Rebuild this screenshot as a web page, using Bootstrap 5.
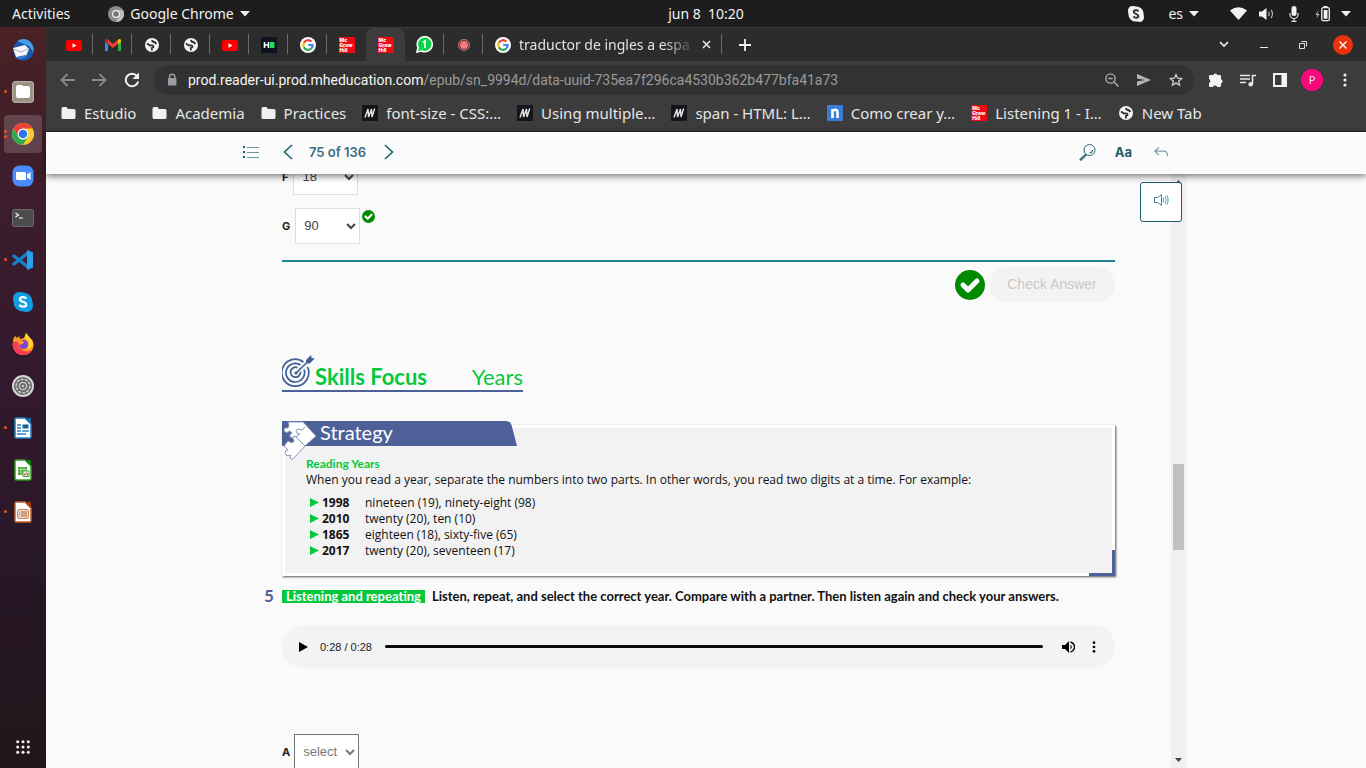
<!DOCTYPE html>
<html lang="es">
<head>
<meta charset="utf-8">
<meta name="viewport" content="width=device-width, initial-scale=1">
<title>Reader – Skills Focus: Years</title>
<link href="https://cdn.jsdelivr.net/npm/bootstrap@5.3.0/dist/css/bootstrap.min.css" rel="stylesheet">
<style>
:root{--ui:"Noto Sans","Open Sans",sans-serif;--book:"Open Sans","Noto Sans",sans-serif;--title:Lato,"Open Sans",sans-serif;--label:Inter,sans-serif;--arial:"Liberation Sans",Arial,sans-serif;--navy:#4d6198;--lime:#05c83c;--petrol:#1f5c6b}
body{font:14px/20px var(--ui);background:#fafafa}
svg{display:block;flex:none}
button{border:0;background:none;padding:0;color:inherit;font:inherit}
/* system bar */
.sysbar{height:27px;background:#1d1d1d;color:#f2f2f2;flex:none}
.sysbar .clock{position:absolute;left:46px;right:0;text-align:center;pointer-events:none}
.app-menu{margin-left:38px;gap:6px}
/* dock */
.dock{width:46px;background:linear-gradient(#4a2124,#3d1d2c 22%,#32192d 50%,#271726 75%,#221619);padding:2px 0 0;flex:none}
.dock-item{width:46px;height:42px;position:relative;display:grid;place-items:center}
.dock-item.current::before{content:"";position:absolute;inset:2px 4px;border-radius:4px;background:#ffffff2b}
.dock-item.running::after{content:"";position:absolute;left:4px;top:19px;width:3px;height:3px;border-radius:2px;background:#e95420}
.dock-item.double::after{top:17px;box-shadow:0 5px #e95420}
.dock-item svg{position:relative}
/* browser chrome */
.tabstrip{height:34px;background:#2c2c2c;border-top:1px solid #3d3d3d;padding-left:8px;flex:none}
.tab{width:39px;height:33px;display:grid;place-items:center;position:relative}
.tab.split::after{content:"";position:absolute;right:0;top:6px;width:1px;height:20px;background:#6a6a6a}
.tab.on{background:#3c3c3c;border-radius:8px 8px 0 0}
.tab-wide{width:239px;display:flex;align-items:center;padding:0 11px 0 12px;color:#e2e2e2}
.tab-title{width:176px;overflow:hidden;white-space:nowrap;text-align:left;-webkit-mask-image:linear-gradient(90deg,#000 82%,transparent);mask-image:linear-gradient(90deg,#000 82%,transparent)}
.win-tools{margin-right:13px;gap:31px}
.close-win{width:20px;height:20px;border-radius:50%;background:#e9330a;display:grid;place-items:center;margin-left:-5px}
.mcg{width:16px;height:16px;background:#ee0a14;color:#fff;font:800 5px/5px var(--label);text-align:left;padding:1px 0 0 1px;flex:none;display:block;white-space:nowrap}
.toolbar{background:#3c3c3c;padding:4px 12px 0 14px;flex:none;color:#e8e8e8}
.omnibox{height:30px;border-radius:15px;background:#323232;padding:0 11px 0 11px;color:#9a9a9a;font-family:Roboto,sans-serif}
.omnibox .host{color:#f5f5f5}
.profile{margin:0 20px 0 14px;width:22px;height:22px;background:#f9077c;font-size:11px;line-height:22px}
.bookmarks{height:37px;background:#3c3c3c;border-bottom:1px solid #1f1d1e;padding-left:15px;gap:16px;flex:none;font-size:15px}
.bookmarks a{color:#e6e6e6;text-decoration:none;display:flex;align-items:center;gap:8px;white-space:nowrap}
/* reader */
.reader-head{height:42px;background:#fbfbfb;box-shadow:0 2px 7px #0000008c;position:relative;z-index:2;flex:none}
.frame{width:100%;max-width:960px}
.reader-head .frame{padding:0 17px 2px;color:var(--petrol)}
.pages{font:600 13px/20px var(--label);color:#3f6c7c}
.book{padding:0 56px;font:12px/16px var(--book);color:#111;overflow:hidden}
.answers{margin-top:-15px;gap:13px}
.answers label,.next label{font:700 11px/16px var(--label);color:#222;margin-right:5px}
.next label{margin-right:4px}
.ok-mark{margin:2px 0 0 2px}
.pick{appearance:none;width:65px;height:36px;border:1px solid #ddd;border-radius:0;font:13px/20px var(--arial);color:#444;padding:0 0 0 8px;background:#fff url("data:image/svg+xml,%3Csvg xmlns='http://www.w3.org/2000/svg' width='10' height='7'%3E%3Cpath d='M1 1l4 4 4-4' fill='none' stroke='%23444' stroke-width='2'/%3E%3C/svg%3E") no-repeat right 3px center}
.next .pick{border-color:#767676;color:#777;background-image:url("data:image/svg+xml,%3Csvg xmlns='http://www.w3.org/2000/svg' width='10' height='7'%3E%3Cpath d='M1 1l4 4 4-4' fill='none' stroke='%23777' stroke-width='2'/%3E%3C/svg%3E")}
.check-row{border-top:2px solid #1f8590;margin-top:16px;padding-top:5px;gap:4px}
.check-btn{height:35px;width:126px;border-radius:18px;background:#f3f3f3;color:#ccc7c7;font:14px/20px var(--arial);padding-bottom:2px}
.skills{color:var(--lime);border-bottom:2px solid var(--navy);margin-top:53px;height:37px;width:241px;font:22px/26px var(--title)}
.strategy{margin-top:33px;border:3px solid #fff;background:#f2f2f2;box-shadow:1px 1px 2px #555;height:151px;padding:28px 21px 0;position:relative}
.strategy-tab{position:absolute;left:-3px;top:-7px}
.strategy-tab h2{position:absolute;left:38px;top:0;margin:0;color:#fff;font:20px/22px var(--title)}
.corner{position:absolute;right:-3px;bottom:-3px;width:26px;height:26px;border:solid var(--navy);border-width:0 3px 3px 0}
.green{color:var(--lime);font:700 12px/16px var(--title)}
.years li{display:flex;align-items:center}
.years svg{margin-bottom:2px}
.years b{width:46px;padding-left:3px}
.task{margin:12px 0 0 -18px;font:700 13px/16px var(--title)}
.task .num{width:18px;font-size:17px;color:var(--navy)}
.task .tagline{background:var(--lime);color:#fff;padding:0 4px;line-height:13px;margin-right:7px}
.player{margin-top:21px;height:43px;border-radius:22px;background:#f1f3f4;padding:0 17px;font:11px/16px var(--arial);color:#222}
.player input{appearance:none;height:3px;background:#0a0a0a;border-radius:2px;min-width:0}
.player input::-webkit-slider-thumb{appearance:none;width:0;height:0}
.next{margin-top:66px}
.scroller{width:15px;background:#f0f0f0;padding:6px 2px;flex:none}
.thumb{width:11px;height:86px;background:#c1c1c1;margin-top:280px}
.speak{position:absolute;right:4px;top:8px;width:42px;height:40px;border:1px solid var(--petrol);border-radius:3px;background:#fff;padding:0 0 4px}
</style>
</head>
<body class="vh-100 overflow-hidden d-flex flex-column">
<svg width="0" height="0" class="position-absolute" aria-hidden="true">
<symbol id="yt" viewBox="0 0 16 16"><rect y="3" width="16" height="11" rx="2.500" fill="#f00"/><path d="M6.500 6.300v4.400l4-2.200z" fill="#fff"/></symbol>
<symbol id="globe" viewBox="0 0 16 16"><circle cx="8" cy="8" r="7" fill="#f5f5f5"/><path d="M3 6.500l3 2q3-.5 3.500.8.200 1.500-1.800 1.700l.3 2.500" stroke="#2c2c2c" stroke-width="1.700" fill="none"/><path d="M8.500 2.800q-.8 1.700.8 2 2 .2 3 2.200" stroke="#2c2c2c" stroke-width="1.900" fill="none"/></symbol>
<symbol id="goog" viewBox="0 0 16 16"><circle cx="8" cy="8" r="8" fill="#fff"/><g fill="none" stroke-width="2.200"><path d="M11.400 4.600A4.800 4.800 0 0 0 3.900 5.600" stroke="#ea4335"/><path d="M3.900 5.600a4.800 4.800 0 0 0 0 4.800" stroke="#fbbc05"/><path d="M3.900 10.400a4.800 4.800 0 0 0 7.300 1.200" stroke="#34a853"/><path d="M11.200 11.600A4.600 4.600 0 0 0 12.700 8H8.200" stroke="#4285f4"/></g></symbol>
<symbol id="mdn" viewBox="0 0 16 16"><rect width="16" height="16" fill="#15141a"/><path d="M3 12.500L6 4M6 4l.6 8L9.500 4l.5 8L12.700 3.500" fill="none" stroke="#e4e4e4" stroke-width="1.400"/></symbol>
<symbol id="folder" viewBox="0 0 14 12"><path d="M0 1.500Q0 0 1.500 0H5l1.500 2h6Q14 2 14 3.500v7Q14 12 12.500 12h-11Q0 12 0 10.500z" fill="#f1f1f1"/></symbol>
<symbol id="caret" viewBox="0 0 10 6"><path d="M0 0h10L5 5.500z" fill="#f2f2f2"/></symbol>
<symbol id="ok" viewBox="0 0 30 30"><circle cx="15" cy="15" r="15" fill="#008a00"/><path d="M8 15l5 5 9-9" fill="none" stroke="#fff" stroke-width="5" stroke-linecap="round" stroke-linejoin="round"/></symbol>
<symbol id="tri" viewBox="0 0 9 9"><path d="M0 0l9 4.500L0 9z" fill="#05c83c"/></symbol>
<symbol id="kebab" viewBox="0 0 4 14"><circle cx="2" cy="2" r="1.600"/><circle cx="2" cy="7" r="1.600"/><circle cx="2" cy="12" r="1.600"/></symbol>
</svg>

<header class="sysbar d-flex align-items-center position-relative px-2">
  <button class="ms-1">Activities</button>
  <button class="app-menu d-flex align-items-center"><svg width="16" height="16" viewBox="0 0 16 16"><circle cx="8" cy="8" r="8" fill="#8b8b8b"/><path d="M8 4h7A8 8 0 0 1 8 16l3.500-6" fill="#bcbcbc"/><circle cx="8" cy="8" r="4" fill="#f0f0f0"/><circle cx="8" cy="8" r="2.800" fill="#777"/></svg><span>Google Chrome</span><svg width="10" height="6"><use href="#caret"/></svg></button>
  <span class="clock">jun 8&nbsp; 10:20</span>
  <div class="ms-auto d-flex align-items-center" style="margin-right:7px">
    <svg width="16" height="16" viewBox="0 0 16 16"><path d="M4.500 0C6 0 7 .4 8 .4A7.500 7.500 0 0 1 15.600 8c0 1 .4 2 .4 3.500A4.500 4.500 0 0 1 11.500 16C10 16 9 15.600 8 15.600A7.500 7.500 0 0 1 .4 8C.4 7 0 6 0 4.500A4.500 4.500 0 0 1 4.500 0z" fill="#f2f2f2"/><path d="M10.500 5.300C9.500 3.800 5.600 3.900 5.700 6c.1 2 4.900 1.600 4.800 4 0 2.200-4.200 2.200-5.200.4" fill="none" stroke="#333" stroke-width="1.900"/></svg>
    <span style="margin:0 6px 0 24px">es</span><svg width="10" height="6"><use href="#caret"/></svg>
    <svg style="margin-left:31px" width="17" height="13" viewBox="0 0 17 13"><path d="M0 3.500Q8.500-3 17 3.500L8.500 13z" fill="#f2f2f2"/></svg>
    <svg style="margin-left:12px" width="15" height="14" viewBox="0 0 15 14"><path d="M0 4.500h3L7.500 1v12L3 9.500H0z" fill="#f2f2f2"/><path d="M9.500 5q1.500 2 0 4M12 3q3 4 0 8" fill="none" stroke="#aaa" stroke-width="1.300"/></svg>
    <svg style="margin-left:15px" width="10" height="16" viewBox="0 0 10 16"><rect x="2.500" width="5" height="10" rx="2.500" fill="#f2f2f2"/><path d="M1 7v1.500a4 4 0 0 0 8 0V7M5 12.500V15M2.500 15.400h5" fill="none" stroke="#ddd" stroke-width="1.200"/></svg>
    <svg style="margin-left:16px" width="15" height="16" viewBox="0 0 15 16"><path d="M3.500 4L.5 9h2L1.500 12.500 4.500 8h-2z" fill="#bbb"/><rect x="6.800" y="1.700" width="7.500" height="13" rx="1.500" fill="none" stroke="#f2f2f2" stroke-width="1.300"/><path d="M8.700 4h3.800v8.800H8.700zM8.500 0h4v2h-4z" fill="#f2f2f2"/></svg>
    <svg style="margin-left:11px" width="10" height="6"><use href="#caret"/></svg>
  </div>
</header>

<div class="d-flex flex-grow-1" style="min-height:0">
<nav class="dock d-flex flex-column" aria-label="Dock">
  <button class="dock-item" aria-label="Thunderbird"><svg width="22" height="22" viewBox="0 0 22 22"><circle cx="11.500" cy="11" r="10.500" fill="#1c56ad"/><path d="M5 2Q14-3 20 5q2 4 1.500 8L17 7z" fill="#45a1e8"/><path d="M1 9l12-3 4 4-3 7-10 1z" fill="#f6f6f9"/><path d="M1 10l8 3 7-3" fill="none" stroke="#aac" stroke-width="1"/><path d="M3 19Q10 22 15 17l-2-1-8 2z" fill="#2e79cf"/></svg></button>
  <button class="dock-item running" aria-label="Files"><svg width="22" height="22" viewBox="0 0 22 22"><rect x=".7" y=".7" width="20.600" height="20.600" rx="2" fill="#9a9283" stroke="#cbc5b8"/><path d="M4 6q0-2 2-2h4l1 1h5q2 0 2 2v8q0 2-2 2H6q-2 0-2-2z" fill="#fff"/></svg></button>
  <button class="dock-item current running double" aria-label="Google Chrome"><svg width="22" height="22" viewBox="0 0 22 22"><circle cx="11" cy="11" r="11" fill="#fcc934"/><path d="M1.500 5.500A11 11 0 0 1 20.500 5.500H11L6.200 13.700z" fill="#ea4335"/><path d="M1.500 5.500L6.200 13.700 11 16.500l4.800-2.800L11 22A11 11 0 0 1 1.500 5.500z" fill="#2da94f"/><circle cx="11" cy="11" r="5.500" fill="#fff"/><circle cx="11" cy="11" r="4.300" fill="#2a78e8"/></svg></button>
  <button class="dock-item" aria-label="Zoom"><svg width="22" height="22" viewBox="0 0 22 22"><rect x=".5" y=".5" width="21" height="21" rx="7" fill="#4a8cff"/><path d="M4 7h8.500q1.500 0 1.500 1.500V15H5.500Q4 15 4 13.500zM15 9.500L18.500 7v8L15 12.500z" fill="#fff"/></svg></button>
  <button class="dock-item" aria-label="Terminal"><svg width="22" height="18" viewBox="0 0 22 18"><rect x=".5" y=".5" width="21" height="17" rx="2" fill="#4c4c4c" stroke="#6b6b6b"/><path d="M3.500 4l3 2-3 2M7 9h4" fill="none" stroke="#fff" stroke-width="1.100"/></svg></button>
  <button class="dock-item running" aria-label="VS Code"><svg width="22" height="22" viewBox="0 0 22 22"><path d="M2 7l14 11M2 15L16 4" stroke="#1681ca" stroke-width="3.400" stroke-linecap="round"/><path d="M15 1l6 2.500v15L15 21z" fill="#27a3ee"/></svg></button>
  <button class="dock-item" aria-label="Skype"><svg width="22" height="22" viewBox="0 0 22 22"><path d="M7 1c2 0 3 .5 4 .5a9.500 9.500 0 0 1 9.500 9.500c0 1 .5 2 .5 4a6 6 0 0 1-6 6c-2 0-3-.5-4-.5A9.500 9.500 0 0 1 1.500 11C1.500 10 1 9 1 7a6 6 0 0 1 6-6z" fill="#0f9fe0"/><path d="M14.300 7.600C13 5.500 8 5.600 8 8.400c0 2.700 6.300 2 6.300 5.100 0 2.900-5.500 2.800-6.800.4" fill="none" stroke="#fff" stroke-width="2.300"/></svg></button>
  <button class="dock-item" aria-label="Firefox"><svg width="22" height="22" viewBox="0 0 22 22"><path d="M1 9Q1 5 3 3l2 2 2-2 1 3 4-1 2-5 4 5q3 2 3.500 6A10 10 0 0 1 11 22 10.500 10.500 0 0 1 1 9z" fill="#ff9a22"/><path d="M1 9a10.500 10.500 0 0 0 10 13 10 10 0 0 0 9-5q-8 4-13-3Q6 10 8 8z" fill="#fb3a55"/><path d="M14 0l4 5q3 2 3 7-3 4-5 4l1-7-4-4z" fill="#ffd634"/><circle cx="11.500" cy="11.500" r="4.500" fill="#7a44d8"/><path d="M5 8h6l1 2-4 2z" fill="#ff9a22"/></svg></button>
  <button class="dock-item" aria-label="Settings"><svg width="22" height="22" viewBox="0 0 22 22"><circle cx="11" cy="11" r="10" fill="#686868" stroke="#d6d6d6" stroke-width="2"/><circle cx="11" cy="11" r="6.800" fill="none" stroke="#ccc" stroke-width="1.600" stroke-dasharray="3 1.200"/><circle cx="11" cy="11" r="3.600" fill="none" stroke="#ccc" stroke-width="1.400"/><circle cx="11" cy="11" r="1.200" fill="#ccc"/></svg></button>
  <button class="dock-item running" aria-label="Writer"><svg width="18" height="22" viewBox="0 0 18 22"><path d="M1 2q0-1 1-1h9l6 6v13q0 1-1 1H2q-1 0-1-1z" fill="#fff" stroke="#1f7fc0" stroke-width="1.500"/><path d="M11 1h6v6z" fill="#1569a5"/><path d="M3 8h4M3 11h4M3 14h4M3 17h9M8 14h7" stroke="#2a86c7" stroke-width="1.500"/><path d="M8.500 7.500h6v4h-6z" fill="#17618f"/></svg></button>
  <button class="dock-item" aria-label="Calc"><svg width="18" height="22" viewBox="0 0 18 22"><path d="M1 2q0-1 1-1h9l6 6v13q0 1-1 1H2q-1 0-1-1z" fill="#fff" stroke="#2a9a1e" stroke-width="1.500"/><path d="M11 1h6v6z" fill="#107c10"/><path d="M4 8h9v8H4z" fill="#43a832"/><path d="M4 10.500h9M4 13h9M7 8v8M10 8v8" stroke="#bfe8b8" stroke-width=".7"/><path d="M9 12h6v5.500H9z" fill="#fff" stroke="#43a832"/><path d="M10.500 16.500v-2M12 16.500v-3.500M13.500 16.500v-2.500" stroke="#c55"/></svg></button>
  <button class="dock-item running" aria-label="Impress"><svg width="18" height="22" viewBox="0 0 18 22"><path d="M1 2q0-1 1-1h9l6 6v13q0 1-1 1H2q-1 0-1-1z" fill="#fff" stroke="#c0602c" stroke-width="1.500"/><path d="M11 1h6v6z" fill="#a33e03"/><rect x="3.500" y="8.500" width="11" height="9" rx="1.500" fill="#f5d9c8" stroke="#c98360"/><path d="M5 11h1M7 11h6M5 13h1M7 13h6M5 15h1M7 15h6" stroke="#b5633b"/></svg></button>
  <button class="dock-item mt-auto" aria-label="Show Applications"><svg width="14" height="14" viewBox="0 0 14 14" fill="#f4f4f4"><circle cx="1.700" cy="1.700" r="1.500"/><circle cx="7" cy="1.700" r="1.500"/><circle cx="12.300" cy="1.700" r="1.500"/><circle cx="1.700" cy="7" r="1.500"/><circle cx="7" cy="7" r="1.500"/><circle cx="12.300" cy="7" r="1.500"/><circle cx="1.700" cy="12.300" r="1.500"/><circle cx="7" cy="12.300" r="1.500"/><circle cx="12.300" cy="12.300" r="1.500"/></svg></button>
</nav>

<div class="d-flex flex-column flex-grow-1" style="min-width:0">
  <div class="tabstrip d-flex">
    <button class="tab split" aria-label="YouTube"><svg width="16" height="16"><use href="#yt"/></svg></button>
    <button class="tab split" aria-label="Gmail"><svg width="16" height="12" viewBox="0 0 16 12"><path d="M1.500 12V2" stroke="#4285f4" stroke-width="3"/><path d="M14.500 12V2" stroke="#34a853" stroke-width="3"/><path d="M1.500 1.500L8 7l6.500-5.500" fill="none" stroke="#ea4335" stroke-width="3.200"/><path d="M0 1.500q.3-2 2-1.300l1 1v4L0 3z" fill="#c5221f"/><path d="M16 1.500q-.3-2-2-1.300l-1 1v4L16 3z" fill="#fbbc04"/></svg></button>
    <button class="tab split" aria-label="New Tab"><svg width="16" height="16"><use href="#globe"/></svg></button>
    <button class="tab split" aria-label="New Tab"><svg width="16" height="16"><use href="#globe"/></svg></button>
    <button class="tab split" aria-label="YouTube"><svg width="16" height="16"><use href="#yt"/></svg></button>
    <button class="tab split" aria-label="HackerRank"><svg width="16" height="16" viewBox="0 0 16 16"><rect width="16" height="16" fill="#0e141e"/><path d="M3.500 5v6M7.500 5v6M3.500 8h4" stroke="#fff" stroke-width="1.600"/><path d="M9 5h4.500v6H9z" fill="#1fe05e"/></svg></button>
    <button class="tab split" aria-label="Google"><svg width="16" height="16"><use href="#goog"/></svg></button>
    <button class="tab"><span class="mcg">Mc<br>Graw<br>Hill</span></button>
    <button class="tab on"><span class="mcg">Mc<br>Graw<br>Hill</span></button>
    <button class="tab split" aria-label="WhatsApp"><svg width="17" height="17" viewBox="0 0 17 17"><path d="M1 16l1-4.500A7.500 7.500 0 1 1 5.500 15z" fill="#0bd146" stroke="#fff" stroke-width="1.600"/><path d="M6.800 6.500L9 5v7" fill="none" stroke="#fff" stroke-width="1.600"/></svg></button>
    <button class="tab split" aria-label="Recorder"><svg width="12" height="12" viewBox="0 0 12 12"><circle cx="6" cy="6" r="5.400" fill="none" stroke="#f37a78"/><circle cx="6" cy="6" r="4" fill="#f37a78"/></svg></button>
    <button class="tab split tab-wide"><svg width="16" height="16"><use href="#goog"/></svg><span class="tab-title ms-2">traductor de ingles a espa</span><svg class="ms-auto" width="9" height="9" viewBox="0 0 9 9"><path d="M1 1l7 7M8 1L1 8" stroke="#eee" stroke-width="1.500"/></svg></button>
    <button style="margin-left:17px" aria-label="New tab"><svg width="12" height="12" viewBox="0 0 12 12"><path d="M6 0v12M0 6h12" stroke="#f2f2f2" stroke-width="1.800"/></svg></button>
    <div class="win-tools d-flex align-items-center ms-auto">
      <button aria-label="Search tabs"><svg width="10" height="7" viewBox="0 0 10 7"><path d="M1 1l4 4 4-4" fill="none" stroke="#eee" stroke-width="1.700"/></svg></button>
      <button aria-label="Minimize"><svg width="8" height="8" viewBox="0 0 8 8"><path d="M0 6.500h8" stroke="#eee"/></svg></button>
      <button aria-label="Restore"><svg width="8" height="8" viewBox="0 0 8 8"><path d="M.5 2.500h5v5h-5zM2.500.5h5v5" fill="none" stroke="#ddd"/></svg></button>
      <button class="close-win" aria-label="Close"><svg width="8" height="8" viewBox="0 0 8 8"><path d="M.5.500l7 7M7.500.500l-7 7" stroke="#fff" stroke-width="1.400"/></svg></button>
    </div>
  </div>

  <div class="toolbar d-flex align-items-center">
    <button aria-label="Back"><svg width="15" height="14" viewBox="0 0 15 14"><path d="M15 7H2M7.500 1L1.500 7l6 6" fill="none" stroke="#8a8a8a" stroke-width="1.800"/></svg></button>
    <button style="margin-left:17px" aria-label="Forward"><svg width="15" height="14" viewBox="0 0 15 14"><path d="M0 7h13M7.500 1l6 6-6 6" fill="none" stroke="#8a8a8a" stroke-width="1.800"/></svg></button>
    <button style="margin:0 14px 0 17px" aria-label="Reload"><svg width="16" height="16" viewBox="0 0 16 16"><path d="M13 4A6.300 6.300 0 1 0 14.200 9.500" fill="none" stroke="#f2f2f2" stroke-width="2"/><path d="M15 .5V7H8.500z" fill="#f2f2f2"/></svg></button>
    <div class="omnibox d-flex align-items-center flex-grow-1">
      <svg style="margin-right:9px" width="14" height="14" viewBox="0 0 14 14"><path d="M4.500 5V4a2.700 2.700 0 0 1 5.400 0v1" fill="none" stroke="#9b9ea4" stroke-width="1.400"/><rect x="3" y="5" width="8.400" height="7.500" rx="1" fill="#9b9ea4"/></svg>
      <div class="flex-grow-1" role="textbox" contenteditable="true" spellcheck="false" aria-label="Address"><span class="host">prod.reader-ui.prod.mheducation.com</span>/epub/sn_9994d/data-uuid-735ea7f296ca4530b362b477bfa41a73</div>
      <svg width="15" height="14" viewBox="0 0 15 14"><circle cx="5.500" cy="5.500" r="4.600" fill="none" stroke="#aaa" stroke-width="1.400"/><path d="M9 9l4.500 4.500M3.300 5.500h4.400" stroke="#aaa" stroke-width="1.500"/></svg>
      <svg style="margin:0 18px 0 17px" width="14" height="12" viewBox="0 0 14 12"><path d="M0 0l14 6L0 12V7.500L8 6 0 4.500z" fill="#b5b5b5"/></svg>
      <svg width="14" height="14" viewBox="0 0 16 16"><path d="M8 1.800l1.900 4.200 4.600.4-3.500 3 1.100 4.500L8 11.500l-4.100 2.400L5 9.400l-3.500-3L6.100 6z" fill="none" stroke="#ccc" stroke-width="1.500"/></svg>
    </div>
    <button style="margin-left:14px" aria-label="Extensions"><svg width="16" height="16" viewBox="0 0 16 16"><path d="M1 4q0-1 1-1h3.300a2.200 2.200 0 0 1 4.200 0H12q1 0 1 1v3.300a2.200 2.200 0 0 1 0 4.200V14q0 1-1 1H9.200a2.300 2.300 0 0 0-4.300 0H2q-1 0-1-1v-3a2.200 2.200 0 0 0 0-4z" fill="#f2f2f2"/></svg></button>
    <button style="margin-left:16px" aria-label="Media"><svg width="16" height="13" viewBox="0 0 16 13"><path d="M0 1.500h10M0 5h10M0 8.500h6M12.500 10V1.500H16" fill="none" stroke="#e8e8e8" stroke-width="1.600"/><circle cx="10.700" cy="10.300" r="2.300" fill="#e8e8e8"/></svg></button>
    <button style="margin-left:17px" aria-label="Side panel"><svg width="14" height="14" viewBox="0 0 14 14"><path fill-rule="evenodd" d="M0 0h14v14H0zM2 2v10h6.500V2z" fill="#f4f4f4"/></svg></button>
    <button class="profile rounded-circle">P</button>
    <button aria-label="Menu" style="margin-right:7px"><svg width="4" height="14" fill="#eee"><use href="#kebab"/></svg></button>
  </div>

  <nav class="bookmarks d-flex align-items-center" aria-label="Bookmarks">
    <a href="#"><svg width="15" height="12"><use href="#folder"/></svg>Estudio</a>
    <a href="#"><svg width="15" height="12"><use href="#folder"/></svg>Academia</a>
    <a href="#"><svg width="15" height="12"><use href="#folder"/></svg>Practices</a>
    <a href="#"><svg width="16" height="16"><use href="#mdn"/></svg>font-size - CSS:…</a>
    <a href="#"><svg width="16" height="16"><use href="#mdn"/></svg>Using multiple…</a>
    <a href="#"><svg width="16" height="16"><use href="#mdn"/></svg>span - HTML: L…</a>
    <a href="#"><svg width="16" height="16" viewBox="0 0 16 16"><rect width="16" height="16" rx="1" fill="#3b7cd6"/><path d="M5.500 13V4M5.500 6q5-3 5 1.500V13" fill="none" stroke="#fff" stroke-width="2.600"/></svg>Como crear y…</a>
    <a href="#"><span class="mcg">Mc<br>Graw<br>Hill</span>Listening 1 - I…</a>
    <a href="#"><svg width="16" height="16"><use href="#globe"/></svg>New Tab</a>
  </nav>

  <header class="reader-head">
    <div class="frame mx-auto h-100 d-flex align-items-center">
      <button aria-label="Contents" style="margin-right:23px"><svg width="17" height="12" viewBox="0 0 17 12"><path d="M0 1h2M0 6h2M0 11h2" stroke="#1f5c6b" stroke-width="2"/><path d="M4 1.500h12M4 6.500h12M4 11.500h12" stroke="#6f98a6" stroke-width="1.200"/></svg></button>
      <button aria-label="Previous"><svg width="10" height="16" viewBox="0 0 10 16"><path d="M9 1L1.500 8 9 15" fill="none" stroke="#1f6070" stroke-width="1.600"/></svg></button>
      <span class="pages" style="margin:0 18px 0 16px">75 of 136</span>
      <button aria-label="Next"><svg width="10" height="16" viewBox="0 0 10 16"><path d="M1 1l7.500 7L1 15" fill="none" stroke="#1f6070" stroke-width="1.600"/></svg></button>
      <button class="ms-auto" aria-label="Search"><svg width="17" height="17" viewBox="0 0 17 17"><g fill="none" stroke="#2d6575"><circle cx="10.500" cy="6" r="5.500"/><path d="M10.500 9q3-.2 3-3M6.700 10.200L1 15.300l1 1 5.500-5.500" stroke-width="1.100"/></g></svg></button>
      <button style="margin:0 22px 0 19px;font:700 13px/20px var(--label)">Aa</button>
      <button aria-label="Back to page" style="margin-right:1px"><svg width="14" height="10" viewBox="0 0 14 10"><path d="M5 .5L.8 4.200 5 8M1 4.200h9q3.500 0 3.500 4.800" fill="none" stroke="#7c9fac" stroke-width="1.200"/></svg></button>
    </div>
  </header>

  <main class="flex-grow-1 d-flex justify-content-center" style="min-height:0">
    <div class="frame d-flex position-relative">
      <div class="book flex-grow-1">
        <div class="answers d-flex flex-column">
          <div class="d-flex align-items-center"><label for="qf">F</label><select id="qf" class="pick"><option>18</option></select></div>
          <div class="d-flex align-items-center"><label for="qg">G</label><select id="qg" class="pick"><option>90</option></select><svg class="ok-mark align-self-start" width="13" height="13"><use href="#ok"/></svg></div>
        </div>
        <div class="check-row d-flex justify-content-end align-items-center">
          <svg width="30" height="30"><use href="#ok"/></svg>
          <button class="check-btn">Check Answer</button>
        </div>
        <div class="skills d-flex align-items-end">
          <svg class="align-self-start" width="33" height="33" viewBox="0 0 33 33"><g fill="none" stroke="#3f5f94" stroke-width="1.700"><path d="M21.500 7A13.500 13.500 0 1 0 25.500 12"/><path d="M18.500 10A9.300 9.300 0 1 0 22 14.500"/><path d="M15.500 12.600a5 5 0 1 0 3 4"/><path d="M13.500 18.500L28 4.500"/></g><path d="M24 5l5-5 .7 3 3 .6-5 5-3.200-.2z" fill="#3f5f94"/><circle cx="14" cy="18" r="1.600" fill="#3f5f94"/></svg>
          <strong>Skills Focus</strong><span class="ms-auto">Years</span>
        </div>
        <section class="strategy">
          <div class="strategy-tab"><svg width="236" height="40" viewBox="0 0 236 40"><path d="M0 0h224q4 0 5.500 4L235 25H0z" fill="#4d6198"/><g fill="#fff" stroke="#8b97b8" stroke-linejoin="round"><path d="M6 1h15l13 14-11 10-10-10q-3 3-5 1-1-3 2-4L8 10q-4 3-6 0 0-4 4-3l1-3z"/><path d="M13 15l10 10-12 13q-2 1-3-1l1-3q-5 2-6-2 0-3 3-3l-4-4 4-5q5 3 6 0 0-2-2-3z"/></g><path d="M23 6l-3 3q-5-2-6 1 0 3 4 3l-4 3" fill="none" stroke="#8b97b8"/></svg><h2>Strategy</h2></div>
          <div class="green">Reading Years</div>
          <p class="mb-0">When you read a year, separate the numbers into two parts. In other words, you read two digits at a time. For example:</p>
          <ul class="years list-unstyled ms-1 mb-0" style="margin-top:7px">
            <li><svg width="9" height="9"><use href="#tri"/></svg><b>1998</b>nineteen (19), ninety-eight (98)</li>
            <li><svg width="9" height="9"><use href="#tri"/></svg><b>2010</b>twenty (20), ten (10)</li>
            <li><svg width="9" height="9"><use href="#tri"/></svg><b>1865</b>eighteen (18), sixty-five (65)</li>
            <li><svg width="9" height="9"><use href="#tri"/></svg><b>2017</b>twenty (20), seventeen (17)</li>
          </ul>
          <span class="corner"></span>
        </section>
        <div class="task d-flex align-items-center"><span class="num">5</span><span class="tagline">Listening and repeating</span><span>Listen, repeat, and select the correct year. Compare with a partner. Then listen again and check your answers.</span></div>
        <div class="player d-flex align-items-center">
          <button aria-label="Play"><svg width="9" height="10" viewBox="0 0 9 10"><path d="M0 0l9 5-9 5z"/></svg></button>
          <span style="margin:0 13px 0 12px">0:28 / 0:28</span>
          <input type="range" class="flex-grow-1" aria-label="Seek" value="100">
          <button style="margin-left:19px" aria-label="Mute"><svg width="13" height="12" viewBox="0 0 13 12"><path d="M0 4h3l4-4v12L3 8H0zM8.500 3.500q2.500 2.500 0 5z"/><path d="M8.500 1q4 1.300 4 5t-4 5" fill="none" stroke="#000" stroke-width="1.400"/></svg></button>
          <button style="margin:0 2px 0 17px" aria-label="More"><svg width="4" height="12"><use href="#kebab"/></svg></button>
        </div>
        <div class="next d-flex align-items-center"><label for="qa">A</label><select id="qa" class="pick"><option>select</option></select></div>
      </div>
      <div class="scroller d-flex flex-column align-items-center">
        <svg width="7" height="4" viewBox="0 0 7 4"><path d="M0 4h7L3.500 0z" fill="#444"/></svg>
        <div class="thumb"></div>
        <svg class="mt-auto" width="7" height="4" viewBox="0 0 7 4"><path d="M0 0h7L3.500 4z" fill="#444"/></svg>
      </div>
      <button class="speak d-grid" style="place-items:center" aria-label="Read aloud"><svg width="15" height="12" viewBox="0 0 15 12"><path d="M.5 3.500h3L7.500.5v11l-4-3h-3z" fill="none" stroke="#4d7c8a"/><path d="M9 3.500q1.500 2.500 0 5M11 2q2.500 4 0 8M13 1q2.500 5 0 10" fill="none" stroke="#35b3c8"/></svg></button>
    </div>
  </main>
</div>
</div>
<script src="https://cdn.jsdelivr.net/npm/bootstrap@5.3.0/dist/js/bootstrap.bundle.min.js"></script>
</body>
</html>
